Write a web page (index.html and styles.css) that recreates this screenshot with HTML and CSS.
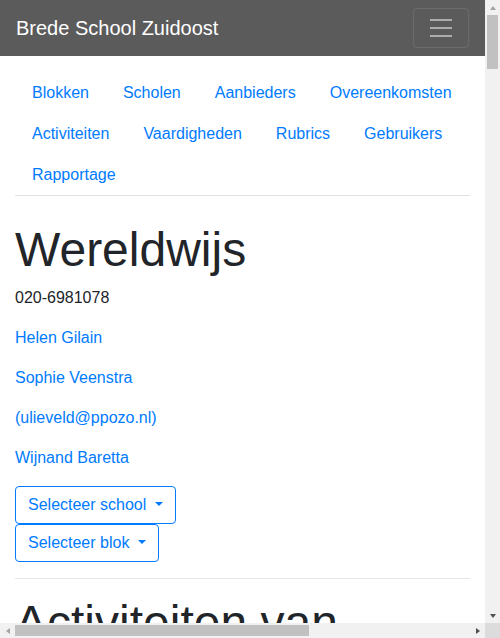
FILE: index.html
```html
<!DOCTYPE html>
<html lang="nl">
<head>
<meta charset="utf-8">
<title>Wereldwijs - Brede School Zuidoost</title>
<link rel="stylesheet" href="styles.css">
</head>
<body>
<div class="window">
  <div class="viewport">
    <nav class="navbar">
      <a class="brand" href="#">Brede School Zuidoost</a>
      <button class="toggler" type="button" aria-label="Menu">
        <svg class="toggler-icon" width="30" height="30" viewBox="0 0 30 30"><path d="M4 7h22M4 15h22M4 23h22" stroke="rgba(255,255,255,0.5)" stroke-width="2" fill="none"/></svg>
      </button>
    </nav>
    <div class="container">
      <ul class="tabs">
        <li><a href="#">Blokken</a></li>
        <li><a href="#">Scholen</a></li>
        <li><a href="#">Aanbieders</a></li>
        <li><a href="#">Overeenkomsten</a></li>
        <li><a href="#">Activiteiten</a></li>
        <li><a href="#">Vaardigheden</a></li>
        <li><a href="#">Rubrics</a></li>
        <li><a href="#">Gebruikers</a></li>
        <li><a href="#">Rapportage</a></li>
      </ul>
      <section class="school">
        <h1 class="title">Wereldwijs</h1>
        <p>020-6981078</p>
        <p><a href="#">Helen Gilain</a></p>
        <p><a href="#">Sophie Veenstra</a></p>
        <p><a href="#">(ulieveld@ppozo.nl)</a></p>
        <p><a href="#">Wijnand Baretta</a></p>
        <div class="dropdown"><button class="btn-outline" type="button">Selecteer school</button></div>
        <div class="dropdown"><button class="btn-outline" type="button">Selecteer blok</button></div>
        <hr class="divider">
        <h1 class="title">Activiteiten van Wereldwijs</h1>
        <table class="activity-table">
          <thead>
            <tr><th>Activiteit</th><th>Aanbieder</th><th>Blok</th><th>Vaardigheden</th><th>Periode</th><th>Acties</th></tr>
          </thead>
          <tbody>
            <tr><td>Muziekles</td><td>Muziekschool Zuidoost</td><td>Blok 1</td><td>Samenwerken</td><td>sep - okt</td><td><a href="#">Bekijk</a></td></tr>
            <tr><td>Voetbal</td><td>Sportbuurtwerk</td><td>Blok 1</td><td>Doorzetten</td><td>sep - okt</td><td><a href="#">Bekijk</a></td></tr>
          </tbody>
        </table>
      </section>
    </div>
  </div>
  <div class="vscroll">
    <span class="arrow"><span class="tri up off"></span></span>
    <div class="vtrack"><div class="vthumb"></div></div>
    <span class="arrow"><span class="tri down"></span></span>
  </div>
  <div class="hscroll">
    <span class="arrow"><span class="tri left off"></span></span>
    <div class="htrack"><div class="hthumb"></div></div>
    <span class="arrow"><span class="tri right"></span></span>
  </div>
  <div class="corner"></div>
</div>
</body>
</html>
```
FILE: styles.css
```css
* { box-sizing: border-box; }

html, body { margin: 0; }

body {
  font-family: "Liberation Sans", Arial, sans-serif;
  font-size: 16px;
  line-height: 1.5;
  color: #212529;
  background: #fff;
}

a { color: #007bff; text-decoration: none; }

/* browser frame with scrollbars */
.window {
  display: grid;
  grid-template-columns: 485px 15px;
  grid-template-rows: 623px 15px;
  width: 500px;
  height: 638px;
  overflow: hidden;
}

.viewport {
  overflow: hidden;
  min-width: 0;
}

.vscroll {
  display: flex;
  flex-direction: column;
  background: #f1f1f1;
}

.hscroll {
  display: flex;
  background: #f1f1f1;
}

.corner { background: #dcdcdc; }

.arrow {
  flex: 0 0 15px;
  width: 15px;
  height: 15px;
  display: flex;
  align-items: center;
  justify-content: center;
}

.tri { width: 0; height: 0; color: #505050; }
.tri.off { color: #a3a3a3; }

.tri.up {
  border-left: 3.5px solid transparent;
  border-right: 3.5px solid transparent;
  border-bottom: 4px solid;
}

.tri.down {
  border-left: 3.5px solid transparent;
  border-right: 3.5px solid transparent;
  border-top: 4px solid;
}

.tri.left {
  border-top: 3.5px solid transparent;
  border-bottom: 3.5px solid transparent;
  border-right: 4px solid;
}

.tri.right {
  border-top: 3.5px solid transparent;
  border-bottom: 3.5px solid transparent;
  border-left: 4px solid;
}

.vtrack {
  flex: 1;
  padding: 0 2px;
}

.vthumb {
  height: 54px;
  background: #c1c1c1;
}

.htrack {
  flex: 1;
  padding: 2px 0;
}

.hthumb {
  width: 294px;
  height: 100%;
  background: #c1c1c1;
}

/* page */
.navbar {
  display: flex;
  align-items: center;
  justify-content: space-between;
  padding: 8px 16px;
  background: #5b5b5b;
}

.brand {
  color: #fff;
  font-size: 20px;
  line-height: 30px;
  padding: 5px 0;
  white-space: nowrap;
}

.toggler {
  display: block;
  padding: 4px 12px;
  line-height: 1;
  background: transparent;
  border: 1px solid rgba(255, 255, 255, 0.1);
  border-radius: 4px;
}

.toggler-icon { display: block; }

.container {
  padding: 0 15px;
}

.tabs {
  display: flex;
  flex-wrap: wrap;
  list-style: none;
  margin: 16px 0 0;
  padding: 0;
  border-bottom: 1px solid #dee2e6;
}

.tabs li { margin-bottom: -1px; }

.tabs a {
  display: block;
  padding: 8px 16px;
  border: 1px solid transparent;
}

.school { margin-top: 26px; }

.title {
  font-size: 48px;
  font-weight: 500;
  line-height: 56.4px;
  margin: 0 0 8px;
}

.school p { margin: 0 0 16px; }

.dropdown { display: flex; }

.btn-outline {
  font-family: inherit;
  font-size: 16px;
  line-height: 1.5;
  padding: 6px 12px;
  color: #007bff;
  background: transparent;
  border: 1px solid #007bff;
  border-radius: 4px;
  white-space: nowrap;
}

.btn-outline::after {
  content: "";
  display: inline-block;
  margin-left: 9px;
  vertical-align: 4px;
  border-top: 4.8px solid;
  border-right: 4.8px solid transparent;
  border-left: 4.8px solid transparent;
  border-bottom: 0;
}

.divider {
  margin: 16px 0;
  border: 0;
  border-top: 1px solid rgba(0, 0, 0, 0.1);
}

.activity-table {
  width: 736px;
  border-collapse: collapse;
}

.activity-table th,
.activity-table td {
  padding: 12px;
  text-align: left;
  border-top: 1px solid #dee2e6;
  vertical-align: top;
}

.activity-table th { border-bottom: 2px solid #dee2e6; }
```
